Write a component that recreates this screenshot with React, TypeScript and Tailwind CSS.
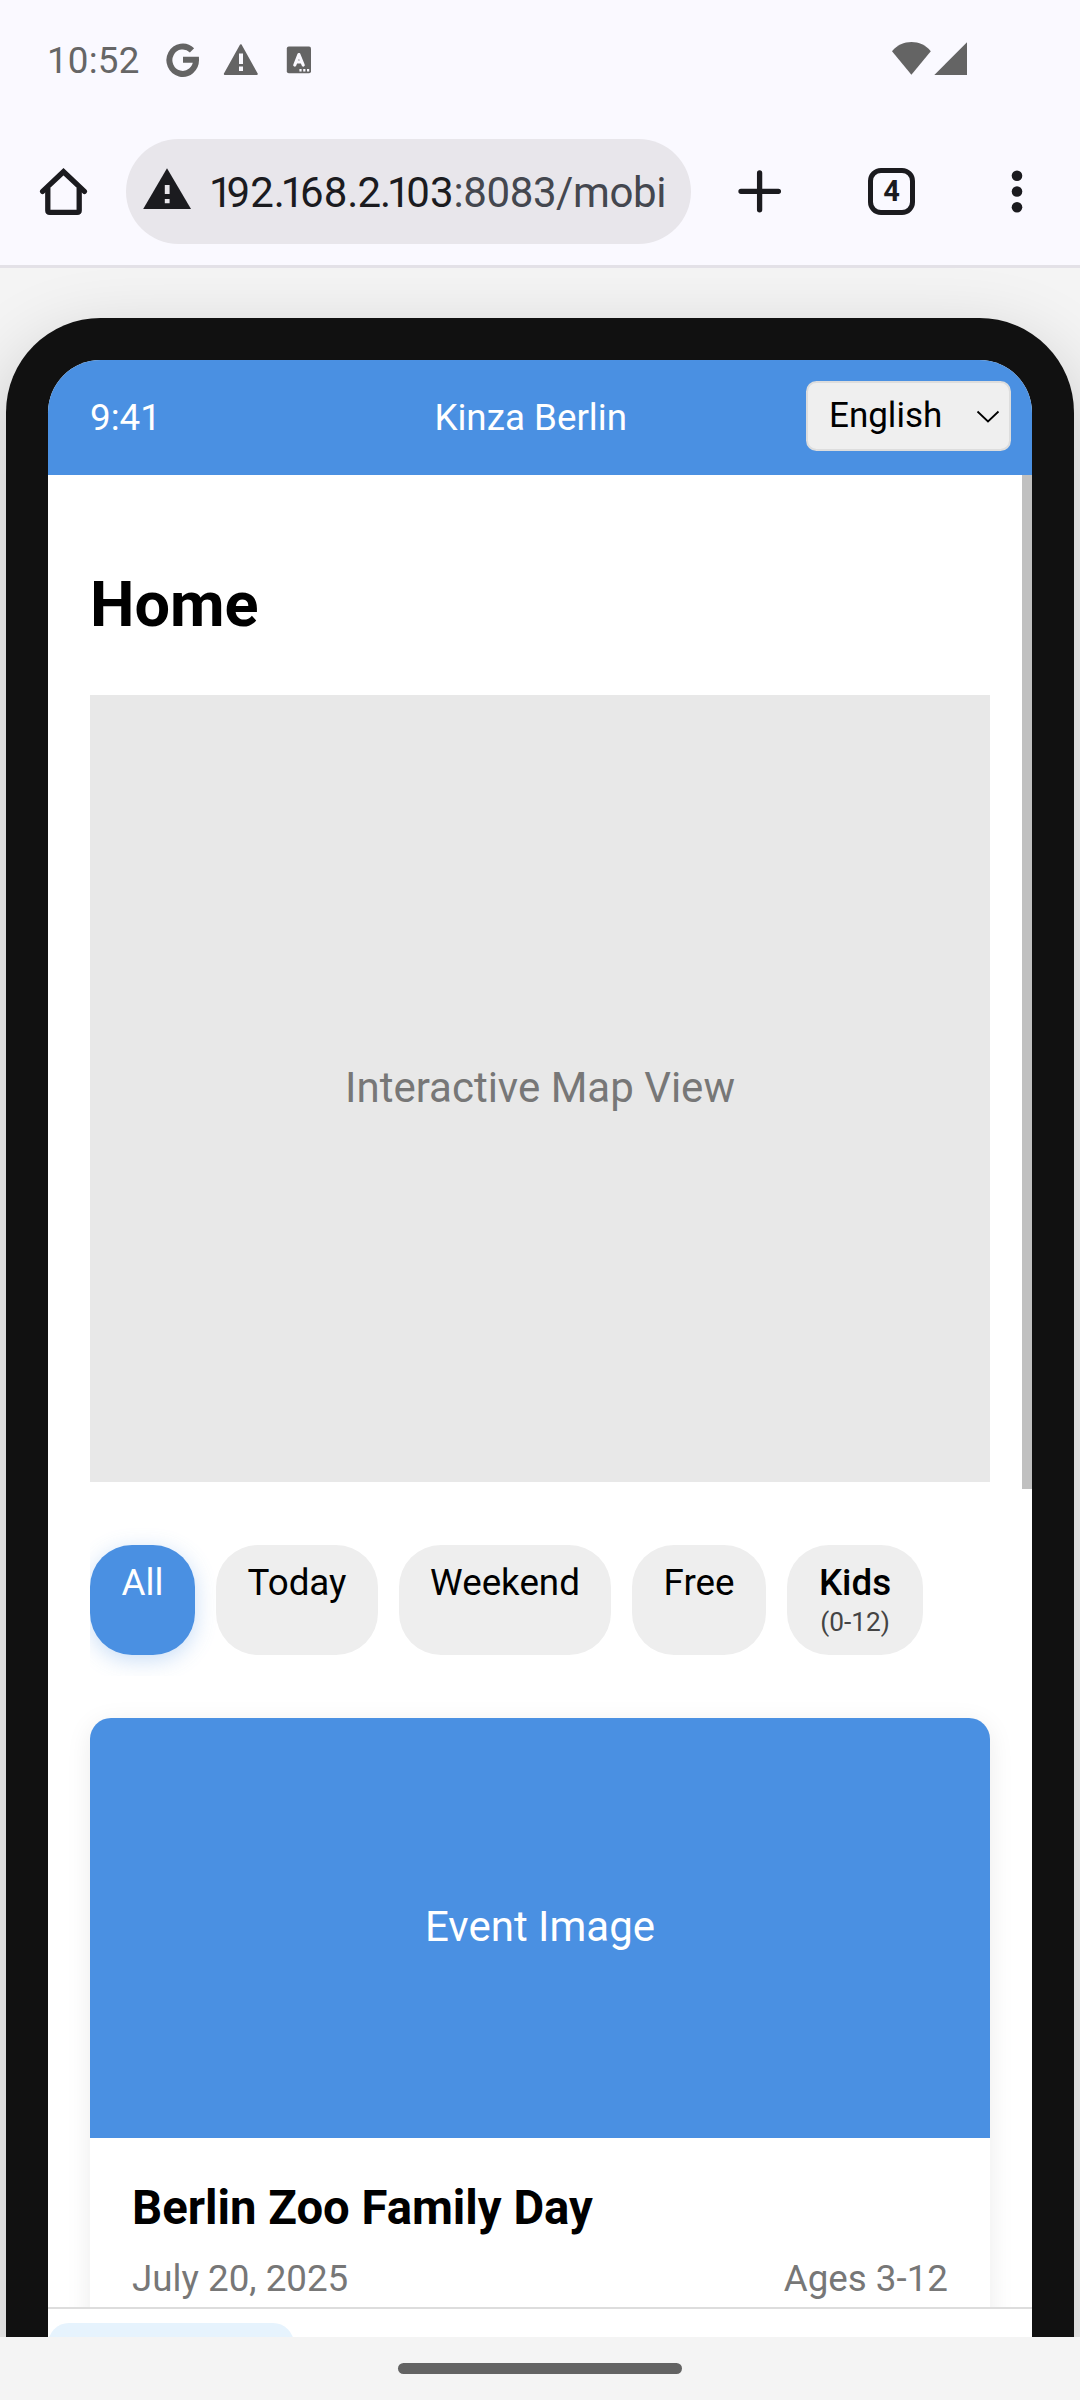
import React from "react";

function StatusBar() {
  return (
    <div className="flex h-[118px] items-start pl-[47px] pr-[112px]">
      <span className="mt-[39px] w-[108px] whitespace-nowrap text-[36.75px] leading-[43px] tracking-[0.2px] text-[#666666]">10:52</span>
      <svg className="mt-[42px] ml-[10px] shrink-0" width="36" height="36" viewBox="165 42 36 36" fill="none" stroke="#646464" strokeWidth="6">
        <path d="M192 50.4 A13.3 13.7 0 1 0 196 59.8 H183" />
      </svg>
      <svg className="mt-[42px] ml-[21px] shrink-0" width="38" height="36" viewBox="222 42 38 36">
        <path d="M240.8 45.2 L256.8 74 H224.8 Z" fill="#646464" stroke="#646464" strokeWidth="2" strokeLinejoin="round" />
        <path d="M239 53.5h4v10.5h-4zM239 66.5h4v4.5h-4z" fill="#faf9ff" />
      </svg>
      <svg className="mt-[42px] ml-[25px] shrink-0" width="28" height="36" viewBox="285 42 28 36">
        <rect x="286.8" y="46.6" width="24.2" height="26.6" rx="2" fill="#646464" />
        <path d="M294.8 65 L298.9 54.6 L303.2 65 M296.3 62 H301.6" fill="none" stroke="#faf9ff" strokeWidth="3.2" strokeLinecap="round" strokeLinejoin="round" />
        <path d="M299.4 69h2.2v2.4h-2.2zM303.2 69h2.2v2.4h-2.2zM307 69h2.2v2.4H307z" fill="#faf9ff" />
      </svg>
      <svg className="mt-[41px] ml-auto shrink-0" width="78" height="36" viewBox="890 41 78 36" fill="#646464">
        <path d="M892 51.2 C902 39 921 39 930.8 51.2 L911.4 74.8 Z" />
        <path d="M967 42.2 V75 H934.3 Z" />
      </svg>
    </div>
  );
}

function BrowserBar() {
  return (
    <div className="flex h-[150px] items-start border-b-[3px] border-[#e3e1e7] pl-[39px] pr-[50px]">
      <svg className="mt-[49px] shrink-0" width="50" height="50" viewBox="39 167 50 50" fill="none" stroke="#1b1b1f" strokeWidth="5.3">
        <path d="M42.6 191.4 L63.5 171.7 L84.4 191.4" strokeLinecap="round" />
        <path d="M47.8 188 V210.6 Q47.8 212.4 49.8 212.4 H77.2 Q79.2 212.4 79.2 210.6 V188" />
      </svg>
      <div className="mt-[21px] ml-[37px] flex h-[105px] w-[565px] items-center overflow-hidden rounded-full bg-[#e8e6eb] pl-[17px]">
        <svg className="shrink-0 -mt-[5px]" width="48" height="42" viewBox="143 168 48 42">
          <path d="M167 168.3 L191 209 H143.2 Z" fill="#1b1b1f" />
          <path d="M164.8 185h4.8v9h-4.8zM164.8 199h4.8v4.2h-4.8z" fill="#e8e6eb" />
        </svg>
        <span className="ml-[18px] mt-[2px] whitespace-nowrap text-[42px] leading-[52px] text-[#1b1b1f]">
          <span className="tracking-[-6px]">1</span>92
          <span className="tracking-[-4.2px]">.1</span>
          <span>68</span>
          <span className="tracking-[-1px]">.2</span>
          <span className="tracking-[-4.2px]">.1</span>03
          <span className="tracking-[-0.4px] text-[#44474f]">:8083/mobi</span>
        </span>
      </div>
      <svg className="mt-[51px] ml-[46px] shrink-0" width="46" height="46" viewBox="737 169 46 46" stroke="#1b1b1f" strokeWidth="5.3" strokeLinecap="round">
        <path d="M741 191.3H778.4M759.6 173V209.8" />
      </svg>
      <div className="mt-[50px] ml-[85px] flex h-[47px] w-[47px] items-center justify-center rounded-[13px] border-[5px] border-[#1b1b1f] text-[29px] font-bold leading-none text-[#1b1b1f]">4</div>
      <svg className="mt-[51px] ml-auto shrink-0" width="26" height="46" viewBox="1004.3 169 26 46" fill="#1b1b1f">
        <circle cx="1017.3" cy="175.7" r="5.3" />
        <circle cx="1017.3" cy="191.5" r="5.3" />
        <circle cx="1017.3" cy="207.3" r="5.3" />
      </svg>
    </div>
  );
}

function AppHeader() {
  return (
    <header className="flex h-[115px] shrink-0 items-center bg-[#4a90e2] pl-[42px] pr-[21px] text-[36.75px] leading-[43px] text-white">
      <span>9:41</span>
      <span className="ml-[273.5px]">Kinza Berlin</span>
      <div className="-mt-[3px] ml-auto flex h-[70px] w-[205px] items-center justify-between rounded-[10.5px] border-2 border-[#dddddd] bg-[#efefef] pl-[21px] pr-[9px] text-[35px] text-black">
        <span className="-mt-[2px]">English</span>
        <svg className="mt-[1px]" width="24" height="14" viewBox="0 0 24 14" fill="none" stroke="black" strokeWidth="1.8">
          <path d="M1.5 1.5 L12 11.5 L22.5 1.5" />
        </svg>
      </div>
    </header>
  );
}

const CHIP = "shrink-0 rounded-[42px] bg-[#eeeeee] pt-[15.75px] text-center";

function Filters() {
  return (
    <div className="mt-[63px] flex h-[131px] gap-[21px] text-[36.75px] leading-[43px] text-black">
      <div className="h-[110px] w-[105px] shrink-0 rounded-[42px] bg-[#4a90e2] pt-[15.75px] text-center text-white shadow-[0_5px_21px_rgba(74,144,226,0.3)]">All</div>
      <div className={`${CHIP} h-[110px] w-[162px]`}>Today</div>
      <div className={`${CHIP} h-[110px] w-[212px]`}>Weekend</div>
      <div className={`${CHIP} h-[110px] w-[134px]`}>Free</div>
      <div className={`${CHIP} h-[110px] w-[136px]`}>
        <div className="font-medium">Kids</div>
        <div className="mt-[3px] text-[26.25px] leading-[31px] text-[#444444]">(0-12)</div>
      </div>
    </div>
  );
}

function EventCard() {
  return (
    <article className="mt-[42px] h-[900px] overflow-hidden rounded-[21px] bg-white shadow-[0_5px_26px_rgba(0,0,0,0.08)]">
      <div className="flex h-[420px] items-center justify-center bg-[#4a90e2] pb-[3px] text-[42px] leading-[49px] text-white">Event Image</div>
      <div className="px-[42px] pt-[43px]">
        <h3 className="text-[47.25px] font-bold leading-[55px] text-black">Berlin Zoo Family Day</h3>
        <div className="mt-[21px] flex justify-between text-[36.75px] leading-[43px] text-[#777777]">
          <span>July 20, 2025</span>
          <span>Ages 3-12</span>
        </div>
      </div>
    </article>
  );
}

export default function App() {
  return (
    <div className="flex h-[2400px] w-[1080px] flex-col overflow-hidden bg-[#faf9ff] font-['Roboto',sans-serif]">
      <StatusBar />
      <BrowserBar />
      <main className="h-[2069px] overflow-hidden bg-[#f4f4f4] px-[6px] pt-[50px]">
        <div className="h-[2300px] rounded-[94.5px] bg-[#111111] p-[42px] shadow-[0_26px_79px_rgba(0,0,0,0.2)]">
          <div className="flex h-full flex-col overflow-hidden rounded-[52.5px] bg-white">
            <AppHeader />
            <div className="flex h-[1832px] shrink-0 overflow-hidden">
              <div className="w-[974px] shrink-0 px-[42px]">
                <h1 className="mt-[93px] w-[900px] text-[63px] font-bold leading-[74px] text-black">Home</h1>
                <div className="mt-[53px] flex h-[787px] w-[900px] items-center justify-center bg-[#e8e8e8] pb-[2px] text-[42px] leading-[49px] text-[#777777]">Interactive Map View</div>
                <div className="w-[900px]">
                  <div className="overflow-hidden">
                    <Filters />
                  </div>
                  <EventCard />
                </div>
              </div>
              <div className="h-[1014px] w-[10px] bg-[#c0c0c0]" />
            </div>
            <nav className="flex h-[200px] shrink-0 border-t-2 border-[#dddddd] bg-white pt-[14px]">
              <div className="h-[150px] w-[246px] rounded-[21px] bg-[#e6f3fd]" />
            </nav>
          </div>
        </div>
      </main>
      <footer className="flex h-[63px] shrink-0 justify-center bg-[#f4f4f4] pt-[26px]">
        <div className="h-[11px] w-[284px] rounded-full bg-[#636363]" />
      </footer>
    </div>
  );
}
